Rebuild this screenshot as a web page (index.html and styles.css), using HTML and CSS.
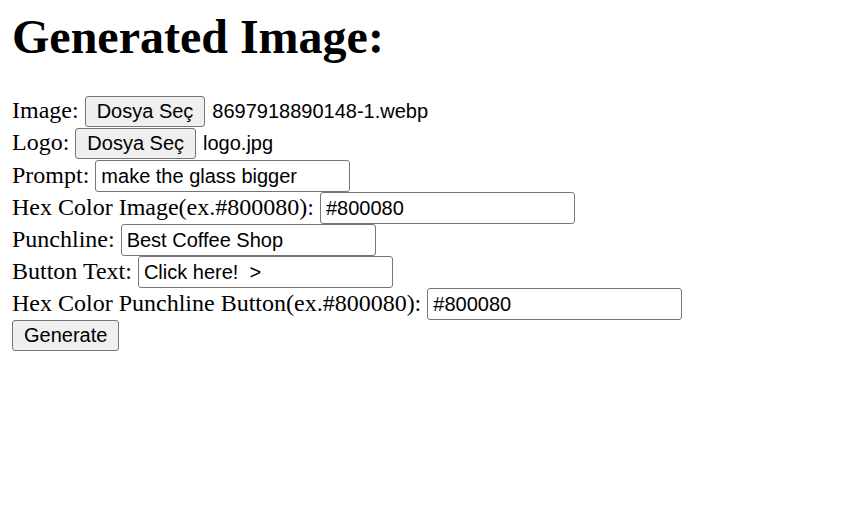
FILE: index.html
```html
<!DOCTYPE html>
<html lang="tr">
<head>
<meta charset="utf-8">
<title>Generated Image</title>
<link rel="stylesheet" href="styles.css">
</head>
<body>
<h1 class="title">Generated Image:</h1>
<form class="form">
  <div class="row">
    <span class="label">Image:</span>
    <span class="file"><button type="button" class="btn">Dosya Seç</button><span class="fname">8697918890148-1.webp</span></span>
  </div>
  <div class="row">
    <span class="label">Logo:</span>
    <span class="file"><button type="button" class="btn">Dosya Seç</button><span class="fname">logo.jpg</span></span>
  </div>
  <div class="row">
    <span class="label">Prompt:</span>
    <input class="field" type="text" value="make the glass bigger">
  </div>
  <div class="row">
    <span class="label">Hex Color Image(ex.#800080):</span>
    <input class="field" type="text" value="#800080">
  </div>
  <div class="row">
    <span class="label">Punchline:</span>
    <input class="field" type="text" value="Best Coffee Shop">
  </div>
  <div class="row">
    <span class="label">Button Text:</span>
    <input class="field" type="text" value="Click here!  &gt;">
  </div>
  <div class="row">
    <span class="label">Hex Color Punchline Button(ex.#800080):</span>
    <input class="field" type="text" value="#800080">
  </div>
  <div class="row">
    <button type="button" class="btn">Generate</button>
  </div>
</form>
</body>
</html>
```

FILE: styles.css
```css
html, body {
  background: #ffffff;
}
body {
  margin: 0 12px;
  font-family: "Liberation Serif", "Times New Roman", serif;
  font-size: 24px;
  color: #000000;
}
.title {
  font-size: 48px;
  font-weight: bold;
  line-height: 55px;
  margin: 9px 0 32px 0;
}
.form {
  display: flex;
  flex-direction: column;
}
.row {
  display: flex;
  align-items: baseline;
  gap: 6px;
  height: 32px;
}
.label {
  white-space: nowrap;
}
.file {
  display: flex;
  align-items: baseline;
  gap: 7px;
}
.btn {
  box-sizing: border-box;
  height: 31px;
  padding: 0 11px;
  border: 1px solid #767676;
  border-radius: 3px;
  background: #efefef;
  color: #000000;
  font-family: "Liberation Sans", Arial, sans-serif;
  font-size: 20px;
  line-height: 29px;
  margin: 0;
}
.fname {
  font-family: "Liberation Sans", Arial, sans-serif;
  font-size: 20px;
}
.field {
  box-sizing: border-box;
  width: 255px;
  height: 32px;
  padding: 0 5px;
  margin: 0;
  border: 1px solid #767676;
  border-radius: 3px;
  background: #ffffff;
  color: #000000;
  font-family: "Liberation Sans", Arial, sans-serif;
  font-size: 20px;
  line-height: 30px;
}
```
